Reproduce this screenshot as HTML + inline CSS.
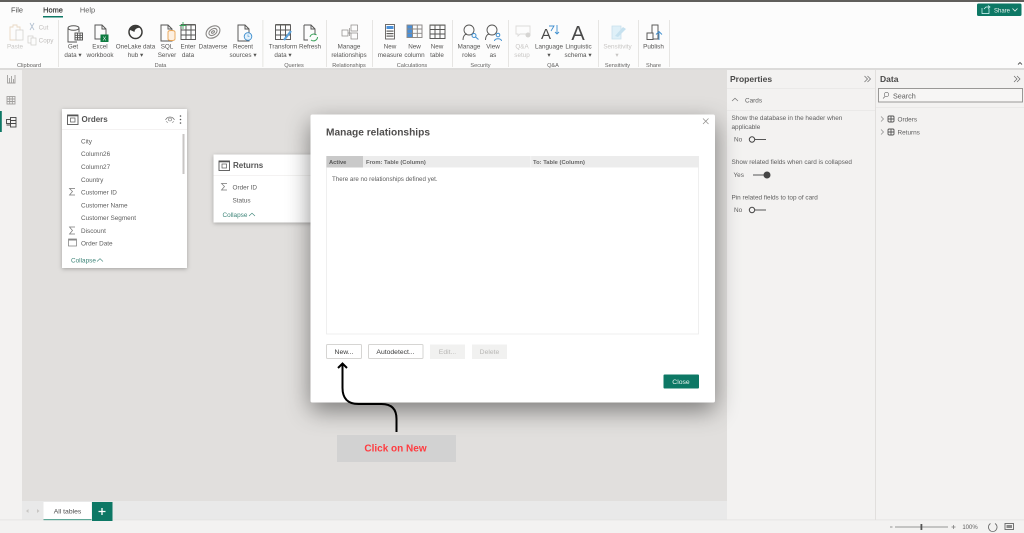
<!DOCTYPE html>
<html><head><meta charset="utf-8"><style>
html,body{margin:0;padding:0;background:#fff}
svg{display:block;font-family:"Liberation Sans",sans-serif}
.r{font-size:6.3px;fill:#555453;text-anchor:middle}
.g{font-size:5.6px;fill:#636261;text-anchor:middle}
.d{font-size:6.3px;fill:#c8c6c4;text-anchor:middle}
.f{font-size:6.4px;fill:#5e5e5e}
.p{font-size:6.4px;fill:#5e5e5e}
.i{fill:none;stroke:#555453;stroke-width:.95}
</style></head><body>
<svg width="1024" height="533" viewBox="0 0 1024 533" xmlns="http://www.w3.org/2000/svg">
<defs>
<filter id="s1" x="-30%" y="-30%" width="160%" height="160%"><feDropShadow dx="0" dy="1" stdDeviation="2" flood-color="#000" flood-opacity=".28"/></filter>
<filter id="s2" x="-30%" y="-30%" width="160%" height="160%"><feDropShadow dx="0" dy="8" stdDeviation="12" flood-color="#000" flood-opacity=".45"/></filter>
<filter id="b" x="0" y="0" width="100%" height="100%"><feGaussianBlur stdDeviation=".3"/></filter>
</defs>
<g filter="url(#b)">
<!-- base -->
<rect width="1024" height="533" fill="#f3f2f1"/>
<rect width="1024" height="2" fill="#605e5c"/>
<rect y="2" width="1024" height="66" fill="#fcfcfc"/>
<rect y="68" width="1024" height="2" fill="#dcdbda"/>
<rect x="22" y="70" width="705" height="431" fill="#e1dfdd"/>
<rect x="22" y="501" width="705" height="19" fill="#e9e9e9"/>
<rect y="520" width="1024" height="13" fill="#f3f2f1"/>
<rect y="519.500" width="1024" height=".8" fill="#e3e2e1"/>
<rect x="875" y="70" width="1" height="450" fill="#e1dfdd"/>

<!-- tabs -->
<text x="17" y="12.500" font-size="7.400" fill="#4d4d4d" text-anchor="middle">File</text>
<text x="53" y="12.500" font-size="7.400" fill="#333" stroke="#333" stroke-width=".2" text-anchor="middle">Home</text>
<text x="87.500" y="12.500" font-size="7.400" fill="#5e5e5e" text-anchor="middle">Help</text>
<rect x="43" y="16" width="20" height="1.500" fill="#117865"/>

<!-- separators -->
<g fill="#e1dfdd"><rect x="58" y="20" width=".8" height="47"/><rect x="262.500" y="20" width=".8" height="47"/><rect x="326" y="20" width=".8" height="47"/><rect x="372" y="20" width=".8" height="47"/><rect x="452" y="20" width=".8" height="47"/><rect x="508" y="20" width=".8" height="47"/><rect x="598" y="20" width=".8" height="47"/><rect x="638" y="20" width=".8" height="47"/><rect x="669" y="20" width=".8" height="47"/></g>

<!-- clipboard icons -->
<g fill="none" stroke="#e9d9c4" stroke-width=".9"><path d="M10 27h3v-2h4v2h3v13H10z"/></g>
<rect x="16" y="30" width="7" height="10" fill="#fcfcfc" stroke="#d3d2d0" stroke-width=".8"/>
<path d="M30 23l4 7M34 23l-4 7" stroke="#b6c3d2" stroke-width=".9" fill="none"/>
<rect x="28" y="36" width="5" height="7" fill="none" stroke="#cfcdcb" stroke-width=".7"/><rect x="31" y="38" width="5" height="7" fill="#fcfcfc" stroke="#cfcdcb" stroke-width=".7"/>
<text x="43.500" y="29.500" class="d" style="fill:#c0bebc">Cut</text>
<text x="46" y="42.500" class="d" style="fill:#c0bebc">Copy</text>
<text x="15" y="48.500" class="d">Paste</text>
<text x="29" y="67" class="g">Clipboard</text>

<!-- get data -->
<g class="i"><path d="M68 28v14h9M68 28c0-3 11-3 11 0v4M68 28c0 3 11 3 11 0"/></g>
<g class="i"><rect x="75" y="33" width="7.500" height="7"/><path d="M75 35.300h7.500M75 37.700h7.500M77.500 33v7M80 33v7"/></g>
<text x="73" y="48.500" class="r">Get</text><text x="73" y="57" class="r">data ▾</text>
<!-- excel -->
<path class="i" d="M95 25h7l4 4v10h-11zM102 25v4h4"/><rect x="100.500" y="34.500" width="8" height="7.500" fill="#107c41"/><text x="104.500" y="40.500" font-size="5.500" fill="#fff" text-anchor="middle">X</text>
<text x="100" y="48.500" class="r">Excel</text><text x="100" y="57" class="r">workbook</text>
<!-- onelake -->
<circle cx="135.500" cy="32" r="6.500" fill="none" stroke="#3b3a39" stroke-width="1.500"/><path d="M129.500 30c3-5 8-5 12-2-4-1-7 1-7 4-2-1-4-2-5-2z" fill="#3b3a39"/>
<text x="135.500" y="48.500" class="r">OneLake data</text><text x="135.500" y="57" class="r">hub ▾</text>
<!-- sql -->
<path class="i" d="M161 25h7l4 4v12h-11zM168 25v4h4"/><path d="M168 32c0-2 7-2 7 0v7c0 2-7 2-7 0z" fill="#fdf0e2" stroke="#e8a454" stroke-width=".9"/>
<text x="167" y="48.500" class="r">SQL</text><text x="167" y="57" class="r">Server</text>
<!-- enter data -->
<g class="i"><rect x="181" y="25" width="14.500" height="14.500"/><path d="M181 30h14.500M181 35h14.500M186 25v14.500M191 25v14.500"/></g><rect x="181" y="24" width="14.500" height="1.500" fill="#605e5c"/><path d="M183 22v7M179.500 25.500h7" stroke="#3aa35b" stroke-width=".9"/>
<text x="188" y="48.500" class="r">Enter</text><text x="188" y="57" class="r">data</text>
<!-- dataverse -->
<g fill="none" stroke="#8a8886" stroke-width="1.100"><ellipse cx="213" cy="32" rx="7.500" ry="5.500" transform="rotate(-35 213 32)"/><ellipse cx="213" cy="32" rx="4.500" ry="3" transform="rotate(-35 213 32)"/><ellipse cx="213" cy="32" rx="1.700" ry="1" transform="rotate(-35 213 32)"/></g>
<text x="213" y="48.500" class="r">Dataverse</text>
<!-- recent -->
<path class="i" d="M238 25h7l4 4v12h-11zM245 25v4h4"/><circle cx="248" cy="36.500" r="3.800" fill="#e3f1fb" stroke="#3f8fcf" stroke-width=".9"/><path d="M248 34.500v2h1.500" stroke="#3f8fcf" fill="none" stroke-width=".6"/>
<text x="243" y="48.500" class="r">Recent</text><text x="243" y="57" class="r">sources ▾</text>
<text x="160.500" y="67" class="g">Data</text>
<!-- transform -->
<g class="i"><rect x="275.500" y="25" width="15" height="14.500"/><path d="M275.500 30h15M275.500 35h15M280.500 25v14.500M285.500 25v14.500"/></g><rect x="275.500" y="24" width="15" height="1.500" fill="#605e5c"/><path d="M284 40l7-9" stroke="#5ba3dd" stroke-width="2.200"/>
<text x="283" y="48.500" class="r">Transform</text><text x="283" y="57" class="r">data ▾</text>
<!-- refresh -->
<path class="i" d="M304 25h7l4 4v6M304 25v15h4M311 25v4h4"/><path d="M310 37a4 4 0 0 1 6.500-2M317.500 37a4 4 0 0 1-6.500 3" fill="none" stroke="#3aa35b" stroke-width="1"/>
<text x="310" y="48.500" class="r">Refresh</text>
<text x="294" y="67" class="g">Queries</text>
<!-- manage rel -->
<g fill="#fcfcfc" stroke="#8a8886" stroke-width=".7"><rect x="342" y="30" width="6" height="6"/><rect x="351" y="25" width="6.500" height="6"/><rect x="351" y="33" width="6.500" height="6"/><path d="M348 33h3M349.500 28v8" fill="none"/></g>
<text x="349" y="48.500" class="r">Manage</text><text x="349" y="57" class="r">relationships</text>
<text x="349" y="67" class="g">Relationships</text>
<!-- new measure -->
<rect x="385.500" y="24.500" width="9" height="14.500" fill="#fff" stroke="#605e5c" stroke-width=".9"/><rect x="386.500" y="26" width="7" height="3" fill="#4a90d9"/><g fill="#605e5c"><rect x="386.500" y="30.500" width="7" height="1.200"/><rect x="386.500" y="33" width="7" height="1.200"/><rect x="386.500" y="35.500" width="7" height="1.200"/></g>
<text x="390" y="48.500" class="r">New</text><text x="390" y="57" class="r">measure</text>
<!-- new column -->
<rect x="407" y="25" width="5.500" height="12.500" fill="#4a90d9"/><g class="i" style="stroke:#8a8886"><rect x="407" y="25" width="15" height="12.500"/><path d="M407 29h15M407 33.300h15M412.500 25v12.500M417.300 25v12.500"/></g>
<text x="414.500" y="48.500" class="r">New</text><text x="414.500" y="57" class="r">column</text>
<!-- new table -->
<g class="i"><rect x="430" y="25" width="15" height="13.500"/><path d="M430 29.500h15M430 34h15M435 25v13.500M440 25v13.500"/></g><rect x="430" y="24.500" width="15" height="1.200" fill="#605e5c"/>
<text x="437" y="48.500" class="r">New</text><text x="437" y="57" class="r">table</text>
<text x="412" y="67" class="g">Calculations</text>
<!-- manage roles -->
<g class="i" style="stroke-width:.9"><circle cx="469" cy="30" r="5"/><path d="M463 40c0-4 2-6 4-6"/></g><circle cx="474" cy="35.500" r="2" fill="none" stroke="#3f8fcf"/><path d="M475.500 37l3 2.500" stroke="#3f8fcf" stroke-width="1.100"/>
<text x="469" y="48.500" class="r">Manage</text><text x="469" y="57" class="r">roles</text>
<!-- view as -->
<g class="i" style="stroke-width:.9"><circle cx="492" cy="30" r="5"/><path d="M485.500 40c0-4 2-6 4-6"/></g><circle cx="498" cy="35" r="1.800" fill="none" stroke="#3f8fcf"/><path d="M494.500 41c0-3 7-3 7 0" fill="none" stroke="#3f8fcf"/>
<text x="493" y="48.500" class="r">View</text><text x="493" y="57" class="r">as</text>
<text x="480.500" y="67" class="g">Security</text>
<!-- Q&A -->
<path d="M516 26h14v8h-10l-2 2v-2h-2z" fill="none" stroke="#dcdbda" stroke-width=".9"/><circle cx="528" cy="35" r="2.500" fill="#d6d5d3"/>
<text x="522" y="48.500" class="d">Q&amp;A</text><text x="522" y="57" class="d">setup</text>
<!-- language -->
<text x="546" y="39" font-size="15" fill="#4a4948" text-anchor="middle">A</text><path d="M549 26h5l-3 5M557 25v9M555 32l2 2 2-2" fill="none" stroke="#3f8fcf" stroke-width=".9"/>
<text x="549" y="48.500" class="r">Language</text><text x="549" y="57" class="r">▾</text>
<!-- linguistic -->
<text x="578" y="40" font-size="20" fill="#4a4948" text-anchor="middle">A</text>
<text x="578.500" y="48.500" class="r">Linguistic</text><text x="578" y="57" class="r">schema ▾</text>
<text x="553" y="67" class="g">Q&amp;A</text>
<!-- sensitivity -->
<path d="M612 26h9v13h-9z" fill="#dff0f8" stroke="#c8dfeb" stroke-width=".8"/><path d="M615 36l8-9 3 2-8 8z" fill="#c6e1ef"/>
<text x="617.500" y="48.500" class="d">Sensitivity</text><text x="617" y="57" class="d">▾</text>
<text x="617.500" y="67" class="g">Sensitivity</text>
<!-- publish -->
<g class="i"><rect x="648" y="33" width="6" height="6"/><rect x="652" y="25" width="6" height="14" fill="#fcfcfc"/><rect x="647" y="33" width="6" height="6.500" fill="#fcfcfc"/></g><path d="M659 40v-8M656 34.500l3-3 3 3" fill="none" stroke="#3f8fcf" stroke-width=".9"/>
<text x="653.500" y="48.500" class="r">Publish</text>
<text x="653.500" y="67" class="g">Share</text>

<!-- share -->
<rect x="977" y="3.500" width="44.500" height="12.500" rx="1.500" fill="#117865"/>
<path d="M982 8v5.500h7V8.500M984 9l2-2 3 0M988 5.500l2 1.500-2 1.500" fill="none" stroke="#dff" stroke-width=".7"/>
<text x="994" y="12.500" font-size="6" fill="#e8f3f0">Share</text>
<path d="M1012.500 8.500l2.500 2.500 2.500-2.500" fill="none" stroke="#e8f3f0" stroke-width=".8"/>
<path d="M1018 64.500l2-2 2 2" fill="none" stroke="#555" stroke-width=".9"/>

<!-- left rail -->
<g fill="none" stroke="#a19f9d" stroke-width=".9"><path d="M7.500 75v8h7.500v-8M9.500 83v-5M11.500 83v-7M13.500 83v-4"/>
<rect x="7" y="96.500" width="8" height="7.500"/><path d="M7 99h8M7 101.500h8M9.700 96.500v7.500M12.300 96.500v7.500"/></g>
<g fill="none" stroke="#444" stroke-width=".9"><rect x="6.500" y="119.500" width="4" height="4"/><rect x="10.500" y="117.500" width="5.500" height="9.500"/><path d="M10.500 120.500h5.500M10.500 123.500h5.500M6.500 125h4"/></g>
<rect x="0" y="111" width="1.800" height="21" fill="#117865"/>

<!-- Orders -->
<rect x="62" y="109" width="125" height="159" fill="#fff" filter="url(#s1)"/>
<rect x="62" y="129" width="125" height=".6" fill="#eceae8"/>
<rect x="67.500" y="115" width="10.500" height="9.500" fill="#fff" stroke="#555" stroke-width=".9"/><rect x="67.500" y="114.500" width="10.500" height="1.800" fill="#555"/><rect x="70.500" y="118" width="4.500" height="4" fill="none" stroke="#555" stroke-width=".7"/>
<text x="81.500" y="122" font-size="8" font-weight="bold" fill="#555">Orders</text>
<path d="M165.500 120c2-4 7-4 9 0" fill="none" stroke="#777" stroke-width=".7"/><circle cx="170" cy="119.500" r="1.500" fill="none" stroke="#777" stroke-width=".6"/><path d="M166 121.500l2 1M174 121.500l-2 1" stroke="#777" stroke-width=".6"/>
<g fill="#555"><circle cx="180.500" cy="116" r=".8"/><circle cx="180.500" cy="119.500" r=".8"/><circle cx="180.500" cy="123" r=".8"/></g>
<rect x="182.500" y="134" width="2" height="40" fill="#c8c6c4"/>
<g class="f"><text x="81" y="143.500">City</text><text x="81" y="156">Column26</text><text x="81" y="169">Column27</text><text x="81" y="182">Country</text><text x="81" y="194.500">Customer ID</text><text x="81" y="207.500">Customer Name</text><text x="81" y="220">Customer Segment</text><text x="81" y="233">Discount</text><text x="81" y="245.500">Order Date</text></g>
<g fill="none" stroke="#777" stroke-width=".7"><path d="M75 188.500h-5.500l3 3-3 3.500H75M75 227h-5.500l3 3.500-3 3.500H75"/><rect x="68.500" y="239" width="8" height="7"/></g><rect x="68.500" y="239" width="8" height="1.500" fill="#888"/>
<text x="71" y="262.500" font-size="6.400" fill="#3d8478">Collapse</text><path d="M97 261.500l3-2.800 3 2.800" fill="none" stroke="#3d8478" stroke-width=".6"/>

<!-- Returns -->
<rect x="213.500" y="154.500" width="110" height="68" fill="#fff" filter="url(#s1)"/>
<rect x="213.500" y="175" width="110" height=".6" fill="#eceae8"/>
<rect x="219" y="161" width="10.500" height="9.500" fill="#fff" stroke="#555" stroke-width=".9"/><rect x="219" y="160.500" width="10.500" height="1.800" fill="#555"/><rect x="222" y="164" width="4.500" height="4" fill="none" stroke="#555" stroke-width=".7"/>
<text x="233" y="168" font-size="8" font-weight="bold" fill="#555">Returns</text>
<path d="M227 183.500h-5.500l3 3-3 3.500H227" fill="none" stroke="#777" stroke-width=".7"/>
<g class="f"><text x="232.500" y="189.500">Order ID</text><text x="232.500" y="202.500">Status</text></g>
<text x="222.500" y="217" font-size="6.400" fill="#3d8478">Collapse</text><path d="M249 216l3-2.800 3 2.800" fill="none" stroke="#3d8478" stroke-width=".6"/>

<!-- modal -->
<rect x="310.500" y="114.500" width="404.500" height="288" rx="2" fill="#fff" filter="url(#s2)"/>
<text x="326" y="135.500" font-size="10.500" font-weight="bold" fill="#4f4e4d" textLength="104" lengthAdjust="spacingAndGlyphs">Manage relationships</text>
<path d="M703 118.500l5.500 5.500M708.500 118.500l-5.500 5.500" stroke="#8a8886" stroke-width=".7"/>
<rect x="326.500" y="156.500" width="372" height="177.500" fill="#fff" stroke="#ebebeb" stroke-width=".8"/>
<rect x="326" y="156" width="373" height="11.500" fill="#ececec"/>
<rect x="326.500" y="156" width="36.500" height="11.500" fill="#c9c9c9"/>
<rect x="530.500" y="156" width=".7" height="11.500" fill="#f8f8f8"/>
<text x="329" y="164" font-size="5.800" font-weight="bold" fill="#555">Active</text>
<text x="366" y="164" font-size="5.800" font-weight="bold" fill="#666">From: Table (Column)</text>
<text x="533" y="164" font-size="5.800" font-weight="bold" fill="#666">To: Table (Column)</text>
<text x="332" y="181" font-size="6.200" fill="#5e5e5e">There are no relationships defined yet.</text>
<rect x="326.500" y="344.500" width="35" height="14" rx="1" fill="#fff" stroke="#d6d5d3"/>
<rect x="368.500" y="344.500" width="54.500" height="14" rx="1" fill="#fff" stroke="#d6d5d3"/>
<rect x="430" y="344.500" width="35" height="14.500" fill="#f1f1f0"/>
<rect x="472" y="344.500" width="35" height="14.500" fill="#f1f1f0"/>
<text x="344" y="354" font-size="6.800" fill="#3a3a3a" text-anchor="middle">New...</text>
<text x="395.500" y="354" font-size="6.800" fill="#3a3a3a" text-anchor="middle">Autodetect...</text>
<text x="447.500" y="354" font-size="6.800" fill="#b8b7b5" text-anchor="middle">Edit...</text>
<text x="489.500" y="354" font-size="6.800" fill="#b8b7b5" text-anchor="middle">Delete</text>
<rect x="663.500" y="374.500" width="35.500" height="14" rx="1" fill="#117865"/>
<text x="681" y="384" font-size="6.800" fill="#e8f3f0" text-anchor="middle">Close</text>

<!-- annotation -->
<path d="M396.500 432v-13c0-10-5-15-15-15h-23c-11 0-16-6-16-16v-25" fill="none" stroke="#000" stroke-width="2"/>
<path d="M338 368l4.500-4.500 4.500 4.500" fill="none" stroke="#000" stroke-width="2"/>
<rect x="337" y="435" width="119" height="27" fill="#d2d2d2"/>
<text x="395.500" y="451.500" font-size="10" font-weight="bold" fill="#ff3b3f" text-anchor="middle">Click on New</text>

<!-- bottom tabs -->
<path d="M28.500 509v4l-2.500-2zM37 509v4l2.500-2z" fill="#c8c6c4"/>
<rect x="43.500" y="502" width="48" height="18" fill="#fff"/>
<rect x="43.500" y="519" width="48" height="1.200" fill="#5fa797"/>
<text x="67.500" y="513.500" font-size="6.800" fill="#4d4d4d" text-anchor="middle">All tables</text>
<rect x="92" y="502" width="20.500" height="19" fill="#117865"/>
<path d="M102 508v7M98.500 511.500h7" stroke="#fff" stroke-width="1.300"/>

<!-- properties -->
<text x="730" y="82" font-size="8.500" font-weight="bold" fill="#4a4948">Properties</text>
<path d="M864.500 76l3 3-3 3M867.500 76l3 3-3 3" fill="none" stroke="#666" stroke-width=".7"/>
<rect x="727" y="88" width="148" height=".7" fill="#e6e5e4"/>
<path d="M732 101l3-2.800 3 2.800" fill="none" stroke="#777" stroke-width=".7"/>
<text x="745" y="102.500" class="p">Cards</text>
<rect x="727" y="110" width="148" height=".7" fill="#e6e5e4"/>
<text x="731.500" y="120" class="p">Show the database in the header when</text>
<text x="731.500" y="129" class="p">applicable</text>
<text x="734" y="141.500" class="p">No</text>
<path d="M754 139.500h12" stroke="#444" stroke-width=".9"/><circle cx="752" cy="139.500" r="2.700" fill="#f3f2f1" stroke="#444" stroke-width="1"/>
<text x="731.500" y="164" class="p">Show related fields when card is collapsed</text>
<text x="733.500" y="177" class="p">Yes</text>
<path d="M753 175h13" stroke="#444" stroke-width=".9"/><circle cx="767" cy="175" r="3.500" fill="#444"/>
<text x="731.500" y="199.500" class="p">Pin related fields to top of card</text>
<text x="734" y="212" class="p">No</text>
<path d="M754 210h12" stroke="#444" stroke-width=".9"/><circle cx="752" cy="210" r="2.700" fill="#f3f2f1" stroke="#444" stroke-width="1"/>

<!-- data -->
<text x="880" y="82" font-size="8.500" font-weight="bold" fill="#4a4948">Data</text>
<path d="M1014 76l3 3-3 3M1017 76l3 3-3 3" fill="none" stroke="#666" stroke-width=".7"/>
<rect x="878.500" y="88.500" width="144" height="13.500" fill="#f7f6f5" stroke="#8f8e8c" stroke-width=".9"/>
<circle cx="886.500" cy="94.500" r="2.200" fill="none" stroke="#666" stroke-width=".6"/><path d="M885 96.500l-2 2" stroke="#666" stroke-width=".6"/>
<text x="893" y="98.500" font-size="7.200" fill="#5e5e5e">Search</text>
<rect x="876" y="107" width="148" height=".7" fill="#e6e5e4"/>
<path d="M881 116.500l2.500 2.500-2.500 2.500M881 129.500l2.500 2.500-2.500 2.500" fill="none" stroke="#888" stroke-width=".7"/>
<g fill="none" stroke="#555" stroke-width=".9"><rect x="888" y="116" width="6" height="6" rx="1.200"/><path d="M888 119h6M891 116v6"/><rect x="888" y="129" width="6" height="6" rx="1.200"/><path d="M888 132h6M891 129v6"/></g>
<text x="897.500" y="121.500" class="p">Orders</text>
<text x="897.500" y="134.500" class="p">Returns</text>

<!-- status -->
<path d="M890 527h2.500M895 527h53M951.500 527h4M953.500 525v4" stroke="#777" stroke-width=".7"/>
<rect x="920.500" y="524" width="1.800" height="6" fill="#555"/>
<text x="970" y="529" font-size="6" fill="#5e5e5e" text-anchor="middle">100%</text>
<path d="M990.500 523.500a4.300 4.300 0 1 0 4.500 0" fill="none" stroke="#666" stroke-width=".8"/>
<rect x="1005" y="523.500" width="8.500" height="6" fill="none" stroke="#666" stroke-width=".9"/><rect x="1006.500" y="525" width="5.500" height="3" fill="#888"/>
</g>
</svg>
</body></html>
